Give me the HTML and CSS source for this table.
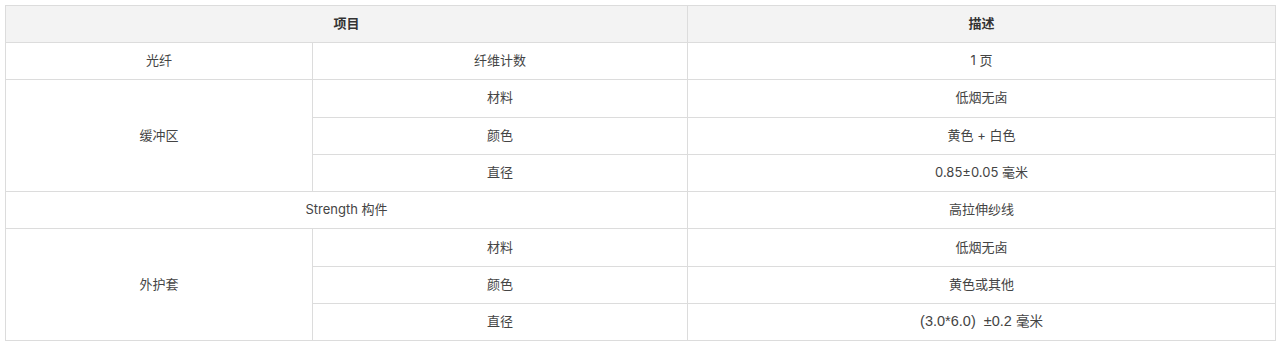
FILE: index.html
```html
<!DOCTYPE html>
<html lang="zh">
<head>
<meta charset="utf-8">
<link rel="stylesheet" href="styles.css">
</head>
<body>
<table class="spec">
  <colgroup>
    <col class="c1"><col class="c2"><col class="c3">
  </colgroup>
  <thead>
    <tr><th colspan="2">项目</th><th>描述</th></tr>
  </thead>
  <tbody>
    <tr><td>光纤</td><td>纤维计数</td><td>1 页</td></tr>
    <tr><td rowspan="3">缓冲区</td><td>材料</td><td>低烟无卤</td></tr>
    <tr><td>颜色</td><td>黄色 + 白色</td></tr>
    <tr><td>直径</td><td>0.85±0.05 毫米</td></tr>
    <tr><td colspan="2">Strength 构件</td><td>高拉伸纱线</td></tr>
    <tr><td rowspan="3">外护套</td><td>材料</td><td>低烟无卤</td></tr>
    <tr><td>颜色</td><td>黄色或其他</td></tr>
    <tr><td>直径</td><td class="alt">(3.0*6.0)&nbsp;&nbsp;±0.2 <span class="cjk">毫米</span></td></tr>
  </tbody>
</table>
</body>
</html>
```
FILE: styles.css
```css
html, body { margin: 0; padding: 0; background: #fff; }
body { padding: 5px 1px 0 5px; }
.spec {
  width: 1271px;
  border-collapse: collapse;
  table-layout: fixed;
  font-family: "Inter", "Noto Sans CJK SC", sans-serif;
  font-size: 13px;
  color: #444;
}
.c1 { width: 307px; }
.c2 { width: 375px; }
.spec th, .spec td {
  border: 1px solid #dcdcdc;
  text-align: center;
  vertical-align: middle;
  padding: 0 8px 2px;
  height: 34.3px;
  line-height: 18px;
}
.spec th {
  background: #f3f3f3;
  font-weight: 600;
  color: #333;
  height: 34px;
  padding-bottom: 2px;
}
.spec td.alt {
  font-family: "Liberation Sans", "Noto Sans CJK SC", sans-serif;
  font-size: 14.5px;
}
.spec td.alt .cjk { font-size: 13.5px; }
```
